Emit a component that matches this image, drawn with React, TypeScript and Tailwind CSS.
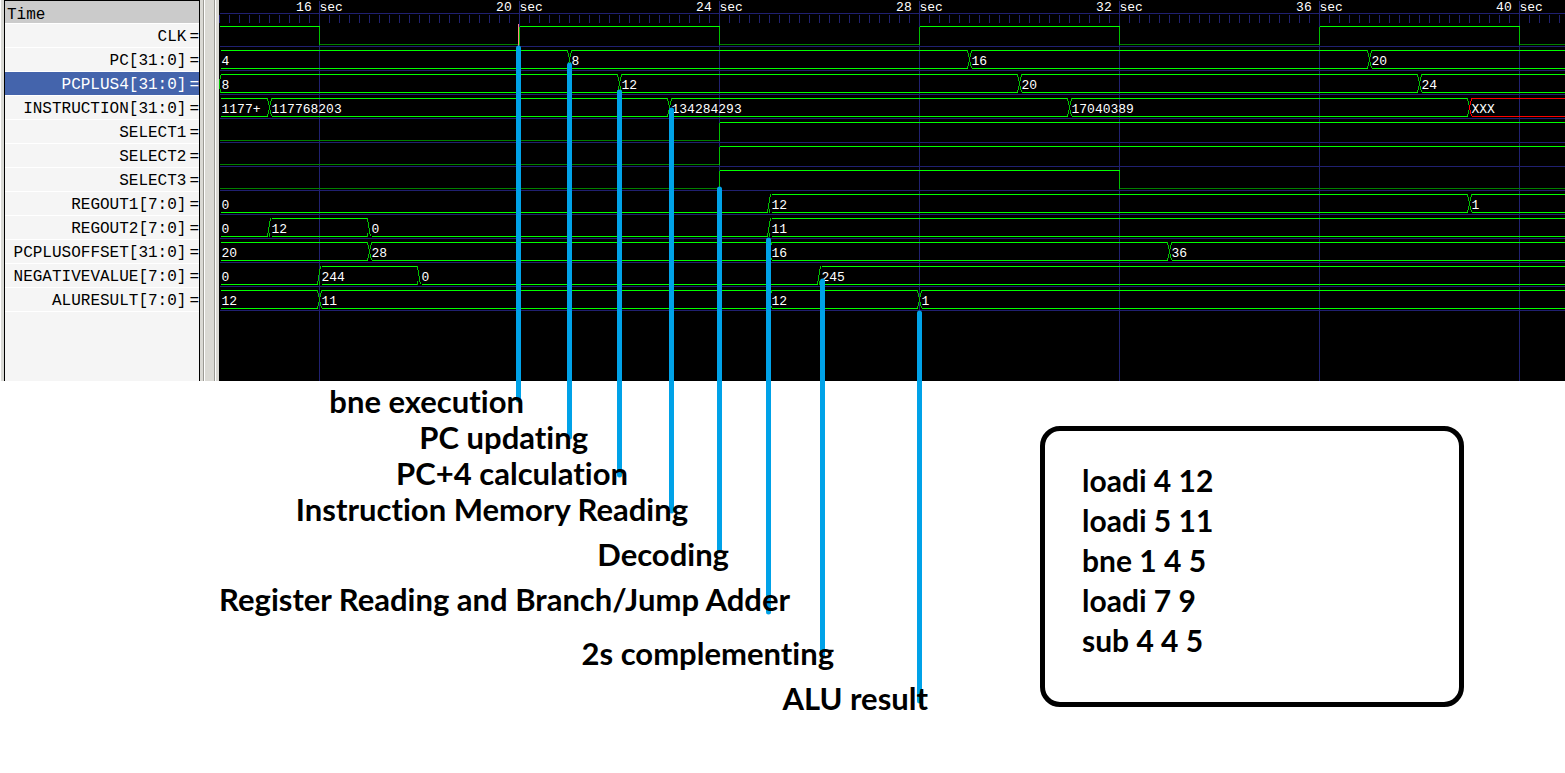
import React from "react";

type Segment = { at: number; value: string; zero?: boolean; error?: boolean };
type Signal = { name: string; selected?: boolean; bits?: [number, 0 | 1][]; bus?: Segment[]; edgeAtStart?: boolean };

const WIDTH = 1346;
const ROW = 24;

const signals: Signal[] = [
  { name: "CLK", bits: [[0, 1], [100, 0], [300, 1], [500, 0], [700, 1], [900, 0], [1100, 1], [1300, 0]] },
  { name: "PC[31:0]", bus: [{ at: 0, value: "4" }, { at: 350, value: "8" }, { at: 750, value: "16" }, { at: 1150, value: "20" }] },
  { name: "PCPLUS4[31:0]", selected: true, edgeAtStart: true, bus: [{ at: 0, value: "8" }, { at: 400, value: "12" }, { at: 800, value: "20" }, { at: 1200, value: "24" }] },
  { name: "INSTRUCTION[31:0]", bus: [{ at: 0, value: "1177+" }, { at: 50, value: "117768203" }, { at: 450, value: "134284293" }, { at: 850, value: "17040389" }, { at: 1250, value: "XXX", error: true }] },
  { name: "SELECT1", bits: [[0, 0], [500, 1]] },
  { name: "SELECT2", bits: [[0, 0], [500, 1]] },
  { name: "SELECT3", bits: [[0, 0], [500, 1], [900, 0]] },
  { name: "REGOUT1[7:0]", bus: [{ at: 0, value: "0", zero: true }, { at: 550, value: "12" }, { at: 1250, value: "1" }] },
  { name: "REGOUT2[7:0]", bus: [{ at: 0, value: "0", zero: true }, { at: 50, value: "12" }, { at: 150, value: "0", zero: true }, { at: 550, value: "11" }] },
  { name: "PCPLUSOFFSET[31:0]", bus: [{ at: 0, value: "20" }, { at: 150, value: "28" }, { at: 550, value: "16" }, { at: 950, value: "36" }] },
  { name: "NEGATIVEVALUE[7:0]", bus: [{ at: 0, value: "0", zero: true }, { at: 100, value: "244" }, { at: 200, value: "0", zero: true }, { at: 600, value: "245" }] },
  { name: "ALURESULT[7:0]", bus: [{ at: 0, value: "12" }, { at: 100, value: "11" }, { at: 550, value: "12" }, { at: 700, value: "1" }] },
];

const marks = [
  { label: "16 sec", x: 100 },
  { label: "20 sec", x: 300 },
  { label: "24 sec", x: 500 },
  { label: "28 sec", x: 700 },
  { label: "32 sec", x: 900 },
  { label: "36 sec", x: 1100 },
  { label: "40 sec", x: 1300 },
];

const pointers = [
  { x: 518, from: 48, to: 400 },
  { x: 569, from: 65, to: 437 },
  { x: 619, from: 92, to: 475 },
  { x: 671, from: 110, to: 511 },
  { x: 719, from: 189, to: 550 },
  { x: 768, from: 240, to: 612 },
  { x: 822, from: 281, to: 656 },
  { x: 919, from: 313, to: 701 },
];

const program = ["loadi 4 12", "loadi 5 11", "bne 1 4 5", "loadi 7 9", "sub 4 4 5"];

function BitTrace({ bits, y }: { bits: [number, 0 | 1][]; y: number }) {
  return (
    <g>
      {bits.map(([at, level], i) => {
        const end = bits[i + 1]?.[0] ?? WIDTH;
        const lineY = level ? y + 2 : y + 20;
        return (
          <g key={at}>
            {i > 0 && <path d={`M${at} ${y + 2}V${y + 20}`} stroke="#00c000" />}
            <path d={`M${at} ${lineY}H${end}`} stroke={level ? "#00ff00" : "#008000"} />
          </g>
        );
      })}
    </g>
  );
}

function BusTrace({ bus, y, edgeAtStart }: { bus: Segment[]; y: number; edgeAtStart?: boolean }) {
  const top = y + 2;
  const bottom = y + 20;
  return (
    <g>
      {edgeAtStart && <path d={`M1 ${top}V${top + 4}M0 ${top + 4}V${bottom - 4}M1 ${bottom - 4}V${bottom}`} stroke="#00c000" />}
      {bus.map((seg, i) => {
        const next = bus[i + 1];
        const prev = bus[i - 1];
        const start = i === 0 ? seg.at + 1 : seg.at + 2;
        const end = next ? next.at - 2 : WIDTH;
        const color = seg.error ? "#ff0000" : "#00ff00";
        const edge = seg.error ? "#ff0000" : "#00c000";
        return (
          <g key={seg.at}>
            {!seg.zero && <path d={`M${start} ${top}H${end}`} stroke={color} />}
            <path d={`M${start} ${bottom}H${end}`} stroke={color} />
            {prev && !prev.zero && !seg.zero && (
              <>
                <path d={`M${seg.at - 2} ${top}L${seg.at} ${y + 11}L${seg.at - 2} ${bottom}`} stroke="#00c000" />
                <path d={`M${seg.at + 2} ${top}L${seg.at} ${y + 11}L${seg.at + 2} ${bottom}`} stroke={edge} />
              </>
            )}
            {prev && prev.zero && <path d={`M${seg.at - 2} ${bottom}L${seg.at + 1} ${top}M${seg.at} ${bottom - 4}V${bottom}`} stroke={edge} />}
            {prev && seg.zero && <path d={`M${seg.at - 2} ${top}L${seg.at + 1} ${bottom}M${seg.at - 2} ${bottom}V${bottom - 4}`} stroke={edge} />}
            <text x={seg.at + 2} y={y + 16} fill="#ffffff" stroke="none">{seg.value}</text>
          </g>
        );
      })}
    </g>
  );
}

function Waves() {
  return (
    <svg
      className="block h-[381px] w-[1346px] font-['Liberation_Mono',monospace] text-[13px]"
      fill="none"
      shapeRendering="crispEdges"
      role="img"
      aria-label="Signal waveforms"
    >
      <g transform="translate(0.5 0.5)">
        <path d={`M0 13H${WIDTH}`} stroke="#202070" />
        {Array.from({ length: 135 }, (_, i) => (
          <path key={i} d={`M${i * 10} 14V22`} stroke="#202070" />
        ))}
        {marks.map((m) => (
          <g key={m.x}>
            <path d={`M${m.x} 0V381`} stroke="#202070" />
            <text x={m.x} y={10} textAnchor="middle" fill="#ffffff" stroke="none">{m.label}</text>
          </g>
        ))}
        {signals.map((s, i) => {
          const y = 24 + i * ROW;
          return (
            <g key={s.name}>
              <path d={`M0 ${y + 22}H${WIDTH}`} stroke="#202070" />
              {s.bits && <BitTrace bits={s.bits} y={y} />}
              {s.bus && <BusTrace bus={s.bus} y={y} edgeAtStart={s.edgeAtStart} />}
            </g>
          );
        })}
        <path d="M299 23V46" stroke="#ff8080" />
      </g>
    </svg>
  );
}

function SignalNames() {
  return (
    <section className="w-[196px] shrink-0 border-x border-t border-black bg-[#f5f5f5] font-['Liberation_Mono',monospace] text-[16px] text-black">
      <h1 className="h-[22px] bg-[#cbcbcb] pl-[2px] leading-[28px]">Time</h1>
      <ul>
        {signals.map((s) => (
          <li
            key={s.name}
            className={
              s.selected
                ? "flex h-6 justify-end gap-[3px] border-t border-white bg-[#4464ac] leading-[26px] text-white"
                : "flex h-6 justify-end gap-[3px] border-t border-white leading-[26px]"
            }
          >
            <span>{s.name}</span>
            <span>=</span>
          </li>
        ))}
        <li className="border-t border-white" />
      </ul>
    </section>
  );
}

function Label({ className, children }: { className: string; children: React.ReactNode }) {
  return <p className={`${className} text-right whitespace-nowrap`}>{children}</p>;
}

export default function App() {
  return (
    <main className="relative min-h-screen overflow-hidden bg-white text-black">
      <div className="flex">
        <div className="w-1 shrink-0 border-l border-white bg-[#d9d9d5]" />
        <SignalNames />
        <div className="flex w-[19px] shrink-0 bg-[#dad9d4]">
          <div className="ml-[3px] w-[2px] border-l border-[#9b9a94] bg-white" />
          <div className="ml-[9px] w-[2px] border-l border-[#9b9a94] bg-white" />
        </div>
        <div className="min-w-0 flex-1 overflow-hidden bg-black">
          <Waves />
        </div>
      </div>

      <svg className="pointer-events-none absolute inset-0 h-full w-full" stroke="#00a2e8" strokeWidth="5" strokeLinecap="round" aria-hidden="true">
        {pointers.map((p) => (
          <path key={p.x} d={`M${p.x + 0.5} ${p.from}V${p.to}`} />
        ))}
      </svg>

      <div className="relative flex font-['Lato',sans-serif] font-bold [font-variant-ligatures:none]">
        <div className="w-[1040px] shrink-0 pt-[2px] text-[31px] leading-9">
          <Label className="w-[524px]">bne execution</Label>
          <Label className="w-[588px]">PC updating</Label>
          <Label className="w-[628px]">PC+4 calculation</Label>
          <Label className="w-[688px]">Instruction Memory Reading</Label>
          <Label className="mt-[9px] w-[729px]">Decoding</Label>
          <Label className="mt-[9px] w-[790px]">Register Reading and Branch/Jump Adder</Label>
          <Label className="mt-[18px] w-[834px]">2s complementing</Label>
          <Label className="mt-[9px] w-[928px]">ALU result</Label>
        </div>
        <section className="mt-[45px] h-[281px] w-[424px] rounded-[20px] border-[5px] border-black px-[37px] pt-[29px] text-[30px] leading-10">
          {program.map((line) => (
            <p key={line}>{line}</p>
          ))}
        </section>
      </div>
    </main>
  );
}
